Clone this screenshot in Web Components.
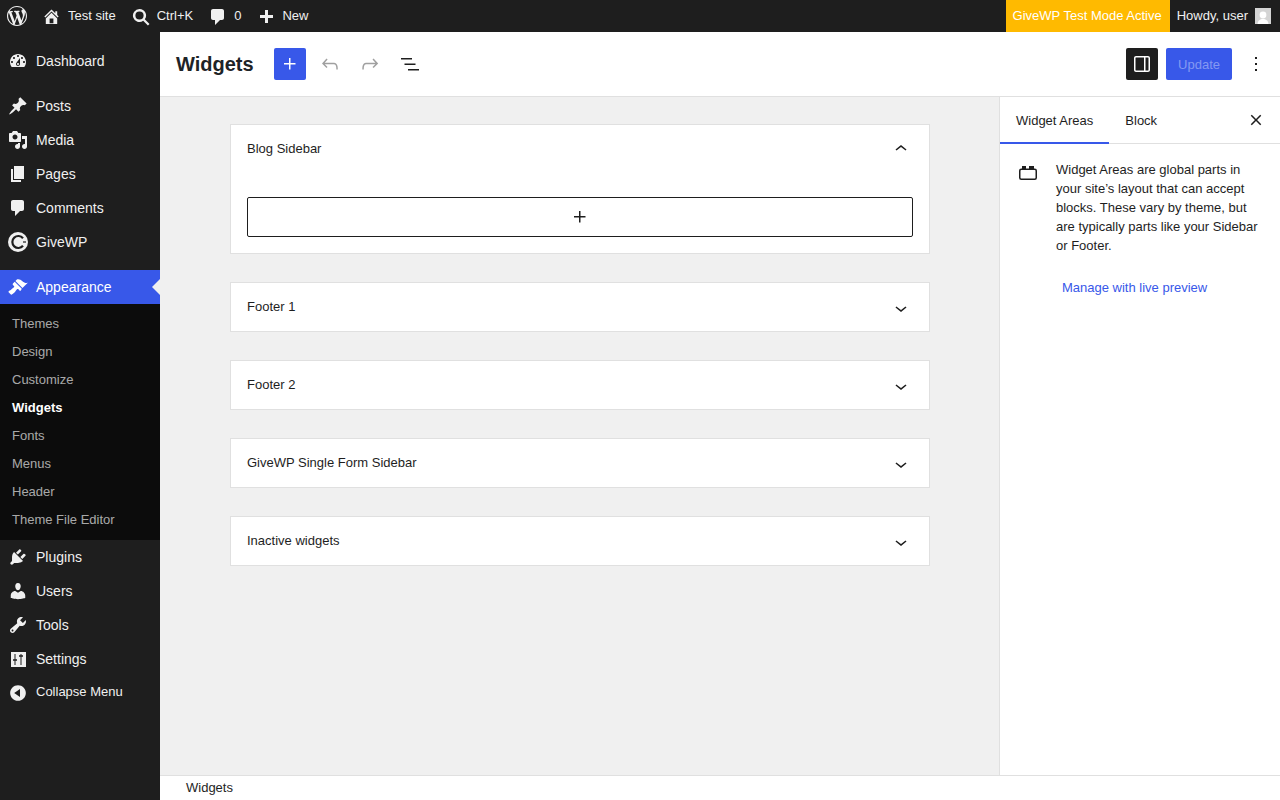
<!DOCTYPE html>
<html lang="en">
<head>
<meta charset="utf-8">
<title>Widgets</title>
<style>
  html, body { margin: 0; height: 100%; overflow: hidden; }
  body { font: 13px "Liberation Sans", Arial, sans-serif; color: #1e1e1e; background: #fff; display: flex; flex-direction: column; }
  .below { display: flex; flex: 1; min-height: 0; }
</style>
</head>
<body>
<wp-admin-bar></wp-admin-bar>
<div class="below">
  <wp-admin-menu>
    <wp-menu-item icon="dashboard">Dashboard</wp-menu-item>
    <wp-menu-sep></wp-menu-sep>
    <wp-menu-item icon="post">Posts</wp-menu-item>
    <wp-menu-item icon="media">Media</wp-menu-item>
    <wp-menu-item icon="page">Pages</wp-menu-item>
    <wp-menu-item icon="comments">Comments</wp-menu-item>
    <wp-menu-item icon="give">GiveWP</wp-menu-item>
    <wp-menu-sep></wp-menu-sep>
    <wp-menu-item icon="appearance" current>Appearance</wp-menu-item>
    <wp-submenu>
      <a>Themes</a><a>Design</a><a>Customize</a><a class="on">Widgets</a><a>Fonts</a><a>Menus</a><a>Header</a><a>Theme File Editor</a>
    </wp-submenu>
    <wp-menu-item icon="plugins">Plugins</wp-menu-item>
    <wp-menu-item icon="users">Users</wp-menu-item>
    <wp-menu-item icon="tools">Tools</wp-menu-item>
    <wp-menu-item icon="settings">Settings</wp-menu-item>
    <wp-menu-item icon="collapse" small>Collapse Menu</wp-menu-item>
  </wp-admin-menu>
  <wp-editor>
    <widget-area open>Blog Sidebar</widget-area>
    <widget-area>Footer 1</widget-area>
    <widget-area>Footer 2</widget-area>
    <widget-area>GiveWP Single Form Sidebar</widget-area>
    <widget-area>Inactive widgets</widget-area>
  </wp-editor>
</div>

<script>
const dashicons = {
  logo: 'M20 10c0-5.51-4.49-10-10-10C4.48 0 0 4.49 0 10c0 5.52 4.48 10 10 10 5.51 0 10-4.48 10-10zM7.78 15.37L4.37 6.22c.55-.02 1.17-.08 1.17-.08.5-.06.44-1.13-.06-1.11 0 0-1.45.11-2.37.11-.18 0-.37 0-.58-.01C4.12 2.69 6.87 1.11 10 1.11c2.33 0 4.45.87 6.05 2.34-.68-.11-1.65.39-1.65 1.58 0 .74.45 1.36.9 2.1.35.61.55 1.36.55 2.46 0 1.49-1.4 5-1.4 5l-3.03-8.37c.54-.02.82-.17.82-.17.5-.05.44-1.25-.06-1.22 0 0-1.44.12-2.38.12-.87 0-2.33-.12-2.33-.12-.5-.03-.56 1.2-.06 1.22l.92.08 1.26 3.41zM17.41 10c.24-.64.74-1.87.43-4.25.7 1.29 1.05 2.71 1.05 4.25 0 3.29-1.73 6.24-4.4 7.78.97-2.59 1.94-5.2 2.92-7.78zM6.1 18.09C3.12 16.65 1.11 13.53 1.11 10c0-1.3.23-2.48.72-3.59C3.25 10.3 4.67 14.2 6.1 18.09zm4.03-6.63l2.58 6.98c-.86.29-1.76.45-2.71.45-.79 0-1.57-.11-2.29-.33.81-2.38 1.62-4.74 2.42-7.1z',
  home: 'M16 8.5l1.53 1.53-1.06 1.06L10 4.62l-6.47 6.47-1.06-1.06L10 2.5l4 4v-2h2v4zm-6-2.46l6 5.99V18H4v-5.97zM12 17v-5H8v5h4z',
  search: 'M7.5 3a6.5 6.5 0 0 1 5.3 10.3l4.7 4.6-1.6 1.6-4.7-4.7A6.5 6.5 0 1 1 7.5 3zm0 2.4a4.1 4.1 0 1 0 0 8.2 4.1 4.1 0 0 0 0-8.2z',
  plus: 'M17 7v3h-5v5H9v-5H4V7h5V2h3v5h5z',
  dashboard: 'M3.76 16h12.48c1.1-1.37 1.76-3.11 1.76-5 0-4.42-3.58-8-8-8s-8 3.58-8 8c0 1.89.66 3.63 1.76 5zM10 4c.55 0 1 .45 1 1s-.45 1-1 1-1-.45-1-1 .45-1 1-1zM6 6c.55 0 1 .45 1 1s-.45 1-1 1-1-.45-1-1 .45-1 1-1zm8 0c.55 0 1 .45 1 1s-.45 1-1 1-1-.45-1-1 .45-1 1-1zm-5.37 5.55L12 7v6c0 1.1-.9 2-2 2s-2-.9-2-2c0-.57.24-1.08.63-1.45zM4 10c.55 0 1 .45 1 1s-.45 1-1 1-1-.45-1-1 .45-1 1-1zm12 0c.55 0 1 .45 1 1s-.45 1-1 1-1-.45-1-1 .45-1 1-1zm-5 3c0-.55-.45-1-1-1s-1 .45-1 1 .45 1 1 1 1-.45 1-1z',
  post: 'M10.44 3.02l1.82-1.82 6.36 6.35-1.83 1.82c-1.05-.68-2.48-.57-3.41.36l-.75.75c-.92.93-1.04 2.35-.35 3.41l-1.83 1.82-2.41-2.41-2.8 2.79c-.42.42-3.38 2.71-3.8 2.29s1.86-3.39 2.28-3.81l2.79-2.79L4.1 9.36l1.83-1.82c1.05.69 2.48.57 3.4-.36l.75-.75c.93-.92 1.05-2.35.36-3.41z',
  media: 'M13 11V4c0-.55-.45-1-1-1h-1.67L9 1H5L3.67 3H2c-.55 0-1 .45-1 1v7c0 .55.45 1 1 1h10c.55 0 1-.45 1-1zM7 4.5c1.38 0 2.5 1.12 2.5 2.5S8.38 9.5 7 9.5 4.5 8.38 4.5 7 5.62 4.5 7 4.5zM14 6h5v10.5c0 1.38-1.12 2.5-2.5 2.5S14 17.88 14 16.5s1.12-2.5 2.5-2.5c.17 0 .34.02.5.05V9h-3V6zm-4 8.05V13h2v3.5c0 1.38-1.12 2.5-2.5 2.5S7 17.88 7 16.5 8.12 14 9.5 14c.17 0 .34.02.5.05z',
  page: 'M6 15V2h10v13H6zm-1 1h8v2H3V5h2v11z',
  comments: 'M5 2h9c1.1 0 2 .9 2 2v7c0 1.1-.9 2-2 2h-2l-5 5v-5H5c-1.1 0-2-.9-2-2V4c0-1.1.9-2 2-2z',
  appearance: 'M14.48 11.06L7.41 3.99l1.5-1.5c.5-.56 2.3-.47 3.51.32 1.21.8 1.43 1.28 2.91 2.1 1.18.64 2.45 1.26 4.45.85zm-.71.71L6.7 4.7 4.93 6.47c-.39.39-.39 1.02 0 1.41l1.06 1.06c.39.39.39 1.03 0 1.42-.6.6-1.43 1.11-2.21 1.69-.35.26-.7.53-1.01.84C1.43 13.23.1 14.76.4 15.06l2.71 2.71c.3.3 2.05-.88 3.37-2.18.3-.31.57-.66.83-1.01.58-.78 1.09-1.61 1.69-2.21.39-.39 1.02-.39 1.41 0l1.06 1.06c.39.39 1.02.39 1.41 0z',
  plugins: 'M13.11 4.36L9.87 7.6 8 5.73l3.24-3.24c.35-.34 1.05-.2 1.56.32.52.51.66 1.21.31 1.55zm-8 1.77l.91-1.12 9.01 9.01-1.19.84c-.71.71-2.63 1.16-3.82 1.16H6.14L4.9 17.26c-.59.59-1.54.59-2.12 0-.59-.58-.59-1.53 0-2.12l1.24-1.24v-3.88c0-1.13.4-3.19 1.09-3.89zm7.26 3.97l3.24-3.24c.34-.35 1.04-.21 1.55.31.52.51.66 1.21.31 1.55l-3.24 3.25z',
  users: 'M10 9.25c-2.27 0-2.73-3.44-2.73-3.44C7 4.02 7.82 2 9.97 2c2.16 0 2.98 2.02 2.71 3.81 0 0-.41 3.44-2.68 3.44zm0 2.57L12.72 10c2.39 0 4.52 2.33 4.52 4.53v2.49s-3.65 1.13-7.24 1.13c-3.65 0-7.24-1.13-7.24-1.13v-2.49c0-2.25 1.94-4.48 4.47-4.48z',
  tools: 'M16.68 9.77c-1.34 1.34-3.3 1.67-4.95.99l-5.41 6.52c-.99.99-2.59.99-3.58 0s-.99-2.59 0-3.57l6.52-5.42c-.68-1.65-.35-3.61.99-4.95 1.28-1.28 3.12-1.62 4.72-1.06l-2.89 2.89 2.82 2.82 2.86-2.87c.53 1.58.18 3.39-1.08 4.65zM3.81 16.21c.4.39 1.04.39 1.43 0 .4-.4.4-1.04 0-1.43-.39-.4-1.03-.4-1.43 0-.39.39-.39 1.03 0 1.43z',
  settings: 'M3 3h15v15H3zM6.5 5v5.2H5v1.5h1.5V16h1v-4.3H9v-1.5H7.5V5zM12.5 5v1.2H11v1.5h1.5V16h1V7.7H15V6.200h-1.500V5z',
  collapse: 'M10 2.16c4.33 0 7.84 3.51 7.84 7.84s-3.51 7.84-7.84 7.84S2.16 14.33 2.16 10 5.71 2.16 10 2.16zm2 11.72V6.12L6.18 9.97z'
}

const gutenberg = {
  plus: 'M11 12.5V17.5H12.5V12.5H17.5V11H12.5V6H11V11H6V12.5H11Z',
  undo: 'M18.3 11.7c-.6-.6-1.4-.9-2.3-.9H6.7l2.9-3.3-1.1-1-4.5 5L8.5 16l1-1-2.7-2.7H16c.5 0 .9.2 1.3.5 1 1 1 3.4 1 4.5v.3h1.5v-.2c0-1.5 0-4.3-1.5-5.7z',
  redo: 'M15.6 6.5l-1.1 1 2.9 3.3H8c-.9 0-1.7.3-2.3.9-1.4 1.5-1.4 4.2-1.4 5.6v.2h1.5v-.3c0-1.1 0-3.5 1-4.5.3-.3.7-.5 1.3-.5h9.2L14.5 15l1.1 1.1 4.6-4.6-4.6-5z',
  list: 'M3 6h11v1.5H3V6Zm3.5 5.5h11V13h-11v-1.5ZM21 17H10v1.5h11V17Z',
  sidebar: 'M18 4H6c-1.1 0-2 .9-2 2v12c0 1.1.9 2 2 2h12c1.1 0 2-.9 2-2V6c0-1.1-.9-2-2-2zm-4 14.5H6c-.3 0-.5-.2-.5-.5V6c0-.3.2-.5.5-.5h8v13zm4.5-.5c0 .3-.2.5-.5.5h-2.5v-13H18c.3 0 .5.2.5.5v12z',
  more: 'M13 19h-2v-2h2v2zm0-6h-2v-2h2v2zm0-6h-2V5h2v2z',
  close: 'M12 13.06l4.2 4.2 1.06-1.06L13.06 12l4.2-4.2-1.06-1.06L12 10.94 7.8 6.74 6.74 7.8 10.94 12l-4.2 4.2 1.06 1.06z',
  down: 'M17.5 11.6L12 16l-5.5-4.4.9-1.2L12 14l4.500-3.6 1 1.200z',
  up: 'M6.5 12.4L12 8l5.500 4.400-.9 1.200L12 10l-4.500 3.600-1-1.200z'
}

const giveIcon = `<svg width="20" height="20" viewBox="0 0 20 20" fill="none">
  <circle cx="10" cy="10" r="10" fill="currentColor"/>
  <path d="M15 6.200A6 6 0 1 0 15 13.800" stroke="#1e1e1e" stroke-width="2.200"/>
  <path d="M9 10h9" stroke="#1e1e1e" stroke-width="1.200"/>
  <path d="M7 10l3.500-2.500h4.500v5h-4.500z" fill="currentColor"/>
</svg>`

const dash = (name, size = 20) => name === 'give' ? giveIcon
  : `<svg width="${size}" height="${size}" viewBox="0 0 20 20" fill="currentColor" fill-rule="evenodd"><path d="${dashicons[name]}"/></svg>`
const gut = (name) => `<svg width="24" height="24" viewBox="0 0 24 24" fill="currentColor"><path d="${gutenberg[name]}"/></svg>`

class AdminBar extends HTMLElement {
  constructor() {
    super()
    this.attachShadow({ mode: 'open' }).innerHTML = `
      <style>
        :host { display: flex; flex: none; height: 32px; background: #1e1e1e; color: #f0f0f0; font-size: 13px; line-height: 32px; }
        .item { display: flex; align-items: center; height: 32px; }
        .logo { padding: 0 7px; }
        .home { padding: 0 8px; gap: 7px; }
        .search { padding: 0 8px; gap: 5px; }
        .comments { padding: 0 8px 0 7px; gap: 6px; }
        .comments svg { margin-top: 2px; }
        .new { padding: 0 8px 0 7px; gap: 6px; }
        .new svg { margin-top: 4px; }
        .space { flex: 1; }
        .test { background: #ffba00; color: #fff; padding: 0 8px 0 7px; }
        .howdy { padding: 0 9px 0 7px; gap: 7px; }
        .avatar { width: 16px; height: 16px; display: block; }
      </style>
      <div class="item logo">${dash('logo')}</div>
      <div class="item home">${dash('home', 19)}<span>Test site</span></div>
      <div class="item search">${dash('search')}<span>Ctrl+K</span></div>
      <div class="item comments">${dash('comments')}<span>0</span></div>
      <div class="item new">${dash('plus')}<span>New</span></div>
      <div class="space"></div>
      <div class="item test">GiveWP Test Mode Active</div>
      <div class="item howdy"><span>Howdy, user</span>
        <svg class="avatar" viewBox="0 0 16 16"><rect width="16" height="16" fill="#d4d4d4"/><circle cx="8" cy="7" r="3.400" fill="#fff"/><path d="M2.500 16c.4-3.600 2.600-5 5.500-5s5.100 1.400 5.500 5z" fill="#fff"/></svg>
      </div>`
  }
}

class AdminMenu extends HTMLElement {
  constructor() {
    super()
    this.attachShadow({ mode: 'open' }).innerHTML = `
      <style>
        :host { display: flex; flex-direction: column; flex: none; width: 160px; padding-top: 12px; box-sizing: border-box; background: #1e1e1e; }
      </style>
      <slot></slot>`
  }
}

class MenuItem extends HTMLElement {
  constructor() {
    super()
    const icon = this.getAttribute('icon')
    this.attachShadow({ mode: 'open' }).innerHTML = `
      <style>
        :host { display: flex; align-items: center; position: relative; height: 34px; padding-left: 8px; gap: 8px; color: #f0f0f0; font-size: 14px; }
        :host([current]) { background: #3858e9; color: #fff; }
        :host([current])::after { content: ""; position: absolute; right: 0; top: 9px; border: 8px solid transparent; border-right-color: #f0f0f0; border-left: 0; }
        :host([small]) { font-size: 13px; height: 32px; }
        :host([small]) span { margin-bottom: 2px; }
        :host([small]) svg { margin-top: 2px; }
        svg { flex: none; display: block; }
      </style>
      ${dash(icon)}<span><slot></slot></span>`
  }
}

class MenuSep extends HTMLElement {
  constructor() {
    super()
    this.attachShadow({ mode: 'open' }).innerHTML = `<style>:host { display: block; height: 11px; }</style>`
  }
}

class SubMenu extends HTMLElement {
  constructor() {
    super()
    this.attachShadow({ mode: 'open' }).innerHTML = `
      <style>
        :host { display: flex; flex-direction: column; padding: 6px 0; background: #0c0c0c; }
        ::slotted(a) { display: block; height: 28px; line-height: 28px; padding-left: 12px; font-size: 13px; color: rgba(240,240,240,.7); }
        ::slotted(a.on) { color: #fff; font-weight: 700; }
      </style>
      <slot></slot>`
  }
}

class EditorMain extends HTMLElement {
  constructor() {
    super()
    this.attachShadow({ mode: 'open' }).innerHTML = `
      <style>
        :host { display: flex; flex-direction: column; flex: 1; min-width: 0; }
        header { display: flex; align-items: center; flex: none; height: 64px; padding: 0 8px 0 16px; border-bottom: 1px solid #e0e0e0; background: #fff; }
        h1 { margin: 0 20px 0 0; font-size: 20px; line-height: 28px; font-weight: 700; color: #1d2327; }
        .btn { display: flex; align-items: center; justify-content: center; width: 32px; height: 32px; border-radius: 2px; color: #1e1e1e; }
        .add { background: #3858e9; color: #fff; margin-right: 8px; }
        .off { color: #a0a0a0; margin-right: 8px; }
        .space { flex: 1; }
        .dark { background: #1e1e1e; color: #fff; margin-right: 8px; }
        .update { display: flex; align-items: center; height: 32px; padding: 0 12px; background: #3858e9; color: #8499f2; border-radius: 2px; margin-right: 8px; }
        .body { display: flex; flex: 1; min-height: 0; }
        .canvas { flex: 1; min-width: 0; background: #f0f0f0; padding: 27px 69px 27px 70px; display: flex; flex-direction: column; gap: 28px; box-sizing: border-box; }
        footer { flex: none; height: 24px; padding-left: 26px; border-top: 1px solid #e0e0e0; line-height: 23px; background: #fff; }
      </style>
      <header>
        <h1>Widgets</h1>
        <div class="btn add">${gut('plus')}</div>
        <div class="btn off">${gut('undo')}</div>
        <div class="btn off">${gut('redo')}</div>
        <div class="btn">${gut('list')}</div>
        <div class="space"></div>
        <div class="btn dark">${gut('sidebar')}</div>
        <div class="update">Update</div>
        <div class="btn">${gut('more')}</div>
      </header>
      <div class="body">
        <div class="canvas"><slot></slot></div>
        <settings-panel></settings-panel>
      </div>
      <footer>Widgets</footer>`
  }
}

class WidgetArea extends HTMLElement {
  constructor() {
    super()
    const open = this.hasAttribute('open')
    this.attachShadow({ mode: 'open' }).innerHTML = `
      <style>
        :host { display: block; flex: none; background: #fff; border: 1px solid #e0e0e0; }
        .head { display: flex; align-items: center; justify-content: space-between; height: 48px; padding: 0 0 0 16px; font-size: 13px; }
        .head svg { display: block; margin-right: 16px; }
        .head span { margin-bottom: 2px; }
        .down svg { margin-top: 2px; }
        .wrap { padding: 24px 16px 16px; }
        .appender { display: flex; align-items: center; justify-content: center; height: 38px; border: 1px solid #1e1e1e; border-radius: 2px; }
      </style>
      <div class="head ${open ? '' : 'down'}"><span><slot></slot></span>${gut(open ? 'up' : 'down')}</div>
      ${open ? `<div class="wrap"><div class="appender">${gut('plus')}</div></div>` : ''}`
  }
}

class SettingsPanel extends HTMLElement {
  constructor() {
    super()
    this.attachShadow({ mode: 'open' }).innerHTML = `
      <style>
        :host { display: block; flex: none; width: 281px; box-sizing: border-box; background: #fff; border-left: 1px solid #e0e0e0; font-size: 13px; }
        .tabs { display: flex; align-items: center; height: 46px; border-bottom: 1px solid #e0e0e0; }
        .tab { display: flex; align-items: center; height: 46px; padding: 0 16px; color: #1e1e1e; box-sizing: border-box; }
        .tab.on { box-shadow: inset 0 -2px 0 #3858e9; margin-bottom: -1px; height: 47px; }
        .close { margin-left: auto; margin-right: 12px; height: 24px; }
        .info { display: flex; padding: 16px 16px 0; gap: 16px; }
        .icon { flex: none; width: 24px; height: 24px; display: block; }
        p { margin: 0; line-height: 19px; }
        a { display: block; margin: 23px 0 0 62px; line-height: 19px; color: #3858e9; }
      </style>
      <div class="tabs">
        <div class="tab on">Widget Areas</div>
        <div class="tab">Block</div>
        <div class="close">${gut('close')}</div>
      </div>
      <div class="info">
        <svg class="icon" viewBox="0 0 24 24" fill="none"><rect x="3.750" y="9.250" width="16.500" height="10" rx="1.500" stroke="#1e1e1e" stroke-width="1.500"/><rect x="6" y="6" width="4" height="3" fill="#1e1e1e"/><rect x="13" y="6" width="5" height="3" fill="#1e1e1e"/></svg>
        <p>Widget Areas are global parts in your site’s layout that can accept blocks. These vary by theme, but are typically parts like your Sidebar or Footer.</p>
      </div>
      <a>Manage with live preview</a>`
  }
}

customElements.define('wp-admin-bar', AdminBar)
customElements.define('wp-admin-menu', AdminMenu)
customElements.define('wp-menu-item', MenuItem)
customElements.define('wp-menu-sep', MenuSep)
customElements.define('wp-submenu', SubMenu)
customElements.define('settings-panel', SettingsPanel)
customElements.define('widget-area', WidgetArea)
customElements.define('wp-editor', EditorMain)
</script>
</body>
</html>
